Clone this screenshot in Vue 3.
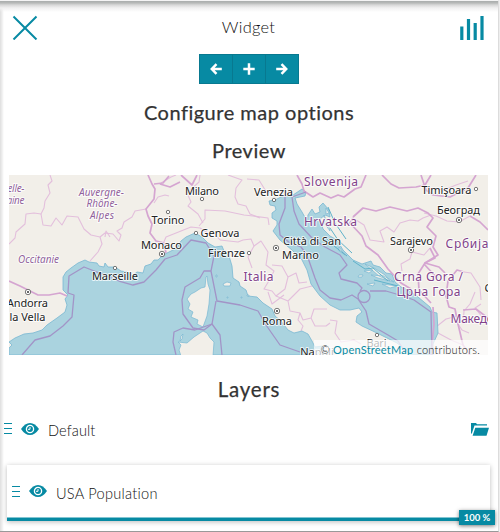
<script setup>
const regions = [
  'M9 244L15 238L16 232L25 224L26 214L34 213L41 214L44 208L45 201L50 193L48 185L52 181L50 175',
  'M41 214L43 225L51 226L56 218L62 225L67 216L78 217L84 229L91 235L100 237L105 233L113 234L119 241L121 235L117 231L122 228L124 222L132 217L135 211L146 209',
  'M100 237L102 244L98 252L90 261M105 237L106 231L110 237',
  'M154 203L158 197L165 195L169 196',
  'M199 226L205 219L205 210L225 211L244 215L253 216L268 218L269 225',
  'M200 175L199 182L187 193L191 202L188 206L198 214L203 223',
  'M161 183L171 177L176 175M228 175L242 180L236 188L235 197L238 204L246 206L250 214L260 218',
  'M247 179L259 180L267 193L279 191L291 193',
  'M163 244L166 237L181 231L191 227L200 228L208 233L215 234L220 240',
  'M220 240L238 242L243 240L251 239L254 246L261 241L268 252L266 265L274 271L270 279L264 289L272 291L276 296L285 289L288 277L296 273L299 283L307 282',
  'M254 246L248 257L252 268M268 292L272 304L284 295M272 265L282 266L288 277',
  'M276 296L288 301L300 289L316 285M288 301L290 311L300 313L303 320L311 318L314 309L327 309',
  'M300 313L298 320L303 326L301 331M311 318L315 326L326 326L330 323',
  'M330 320L337 321L335 333L341 342L354 340L361 344',
  'M353 218L364 225L370 240L384 242L380 231L387 227L394 232L400 223L410 220L418 221L423 218L431 215',
  'M402 271L401 264L410 259L412 252L424 255L430 248',
  'M424 187L444 190L456 185L468 181M424 213L436 216L447 221L459 222L470 216',
  'M464 272L471 273L480 287L481 300M475 292L470 304L464 311L463 324M436 327L446 319L458 316',
  'M481 304L475 308L483 318L488 316M438 333L451 340L463 345M454 318L462 330L469 333',
]
const borders = [
  'M9 281L20 286L30 291L38 295L49 295L60 293L67 296',
  'M148 175L152 184L155 189L154 199L146 209L148 216L152 224L150 233L156 241L164 243L166 253',
  'M154 184L163 183L169 176M160 184L170 187L180 182M181 175L192 185L197 175',
  'M297 175L302 184L304 191L313 197L320 193L331 198L338 195L344 197L355 189L361 187L366 175',
  'M382 175L391 184L399 188L416 187L425 185L431 175',
  'M421 175L426 190L433 195L450 197L468 188L476 175M470 216L480 222L488 230',
  'M353 217L363 208L376 211L390 207L407 211L418 208L428 213L433 218L427 227L436 236L433 247L438 255L425 263L418 274L419 290L431 303',
  'M353 218L350 223L362 236L366 246L378 255L388 269L401 283L411 289',
  'M430 248L435 258L425 263L439 267L445 273M424 264L437 278M433 307L434 324L431 355',
  'M464 272L457 270L448 281L446 296L449 307L455 309L458 324L463 345L470 355M463 310L476 309L488 318',
]
const maritime = [
  'M22 355L35 340L50 336L63 326L72 317L74 295L68 293L69 276L84 267L102 274L119 281L133 285L144 282L156 270L165 259L177 255L191 240L206 243L214 256L211 271L217 301L240 305L258 311L266 325L280 345L300 352',
  'M211 271L204 271L200 278L185 287L182 300L183 314L193 328L204 330L212 324L216 301',
  'M176 355L173 342L174 332L183 328L195 330L212 324L220 335L222 355',
  'M285 194L285 208L279 224L280 235L290 243L301 247L307 255L315 278L320 290L330 298L341 300L352 295L358 299L366 311L369 324L388 335L398 341L405 352',
  'M306 192L292 197L294 211L299 224L312 238L325 247L340 255L347 265L339 273L341 279L357 283L362 288L360 291M370 291L386 291L403 296L414 300L431 312L432 355',
]
const places = [
  { t: 'Milano', x: 202, y: 195 },
  { t: 'Torino', x: 168, y: 223.5 },
  { t: 'Genova', x: 220, y: 237 },
  { t: 'Monaco', x: 161.5, y: 248.5 },
  { t: 'Firenze', x: 226.5, y: 257 },
  { t: 'Venezia', x: 273.5, y: 196 },
  { t: 'Marseille', x: 115, y: 280 },
  { t: 'Andorra', x: 27.5, y: 307 },
  { t: 'la Vella', x: 27.5, y: 320.5 },
  { t: 'Città di San', x: 312, y: 245 },
  { t: 'Marino', x: 300.5, y: 259 },
  { t: 'Roma', x: 277, y: 325 },
  { t: 'Sarajevo', x: 411.5, y: 245 },
  { t: 'Timişoara', x: 446.5, y: 193.5 },
  { t: 'Београд', x: 458.5, y: 214 },
  { t: 'Napoli', x: 317, y: 356 },
  { t: 'Bari', x: 376.5, y: 346.5 },
  { t: 'Скопје', x: 502, y: 292 },
]
const widths = {
  Milano: 34, Torino: 33, Genova: 39, Monaco: 41, Firenze: 37, Venezia: 39, Marseille: 46, Andorra: 41,
  'la Vella': 36, 'Città di San': 58, Marino: 37, Roma: 30, Sarajevo: 43, 'Timişoara': 50, 'Београд': 43, Bari: 20,
}
const countries = [
  { t: 'Slovenija', x: 331, y: 186, w: 54 },
  { t: 'Hrvatska', x: 330.5, y: 226, w: 53 },
  { t: 'Italia', x: 258.5, y: 281, w: 30 },
  { t: 'Србија', x: 467, y: 248, w: 43 },
  { t: 'Crna Gora /', x: 428.5, y: 280.5, w: 69 },
  { t: 'Црна Гора', x: 428.5, y: 295.5, w: 64 },
  { t: 'Македонија', x: 484, y: 323, w: 67 },
]
const provinces = [
  { t: 'Auvergne-', x: 101.5, y: 195.5, w: 45 },
  { t: 'Rhône-', x: 102, y: 207, w: 31 },
  { t: 'Alpes', x: 102, y: 219, w: 24 },
  { t: 'Occitanie', x: 38.5, y: 262.5, w: 41 },
  { t: 'Nouvelle-', x: 5, y: 191.5, w: 39 },
  { t: 'Aquitaine', x: 5, y: 203.5, w: 39 },
]
const towns = [[202, 199], [168, 212], [196, 233], [249, 253], [274, 200], [115, 268], [476, 189], [377, 335]]
const capitals = [[162, 254], [28, 292], [276, 248], [277, 311], [411, 250], [459, 220]]
const layers = [
  { name: 'Default', group: true },
  { name: 'USA Population', opacity: 100 },
]
</script>

<template>
  <main class="panel">
    <header class="head">
      <svg class="close" viewBox="0 0 26 26"><path d="M1.500 2.500L24.500 25.500M24.500 2.500L1.500 25.500" /></svg>
      <span class="title">Widget</span>
      <svg class="chart" viewBox="0 0 26 26"><path d="M2.800 12.500V26M9.500 5V26M16.200 9V26M23 2V26" /></svg>
    </header>

    <nav class="buttons">
      <button><svg viewBox="0 0 12 12"><path d="M6.500 1.200L1.800 6L6.500 10.800M2 6H11.800" /></svg></button>
      <button><svg viewBox="0 0 12 12"><path d="M6 .3V11.700M.3 6H11.700" /></svg></button>
      <button><svg viewBox="0 0 12 12"><path d="M5.500 1.200L10.200 6L5.500 10.800M10 6H.2" /></svg></button>
    </nav>

    <h4 class="h-config"><span>Configure map options</span></h4>
    <h4 class="h-preview"><span>Preview</span></h4>

    <div class="map">
      <svg viewBox="9 175 479 180">
        <rect x="9" y="175" width="479" height="180" fill="#f2efe9" />
        <g class="region"><path v-for="d in regions" :key="d" :d="d" /></g>
        <g class="sea">
          <path d="M9 355V348L12 345L9 342L15 338L24 334L33 333L42 330L47 325L57 318L65 312L67 305L65 299L68 295L63 290L63 277L66 272L71 268L78 263L85 260L89 262L97 263L99 266L104 267L105 263L108 267L115 267L121 271L127 272L132 276L137 272L143 273L145 266L151 264L154 260L158 260L163 255L169 252L177 248L181 241L186 237L195 233L202 237L208 243L215 247L222 246L224 251L229 256L232 266L233 278L239 282L240 286L246 290L248 296L257 297L263 303L272 309L275 316L281 321L288 330L294 333L302 331L308 334L312 341L315 347L323 346L326 355Z" />
          <path d="M306 192L302 189L293 195L283 196L275 200L269 201L270 205L275 206L276 210L272 213L272 218L277 221L277 225L273 231L280 240L292 250L302 260L307 270L311 284L320 296L330 305L340 310L350 310L359 308L362 312L357 316L356 322L362 326L377 333L397 343L408 352L410 355H433L433 344L438 333L437 313L432 312L430 307L418 297L408 290L401 287L395 282L392 274L386 273L380 267L373 265L371 261L362 264L353 260L343 250L337 240L330 236L323 229L320 219L325 215L330 217L329 210L323 203L319 207L320 212L315 214L312 209L308 215L307 221L302 212L297 204L295 198L305 196Z" />
        </g>
        <g class="land">
          <path d="M207 276L208 284L210 290L209 304L207 316L203 327L197 324L198 320L191 317L193 312L188 309L190 304L187 299L191 294L195 292L201 288L205 287L206 277Z" />
          <path d="M203 331L207 333L210 338L214 342L213 356H181L179 350L181 345L178 342L187 343L194 337L200 333Z" />
          <path d="M181 336L183 334L182 339L180 341ZM223 284L227 282L231 283L230 286L224 286ZM216 275h1v2h-1ZM227 297h1v1h-1ZM241 297h1v1h-1ZM247 295h2v1h-2Z" />
          <path d="M324 215L328 224L330 231L325 224ZM326 208L329 213L326 214ZM331 238L336 244L333 243ZM339 247L345 255L339 251ZM365 264L374 268L385 275L390 281L379 276ZM364 271L373 270L369 273ZM371 275L384 276L394 282L378 278ZM359 275h4l-1 2h-4ZM367 284L375 283L373 286ZM382 284L397 286L390 288Z" />
        </g>
        <g class="coastdetail"><path d="M328 207L335 223L346 239M330 228L338 240L352 253M325 237L334 246L347 256M353 261L365 269L373 268L388 281M374 280L398 286" /></g>
        <g class="border"><path v-for="d in borders" :key="d" :d="d" /></g>
        <g class="maritime"><path v-for="d in maritime" :key="d" :d="d" /><circle cx="364" cy="296.500" r="6" /></g>
        <g class="dot">
          <circle v-for="(c, i) in towns" :key="i" :cx="c[0]" :cy="c[1]" r="1.700" />
          <g v-for="(c, i) in capitals" :key="'c' + i">
            <circle :cx="c[0]" :cy="c[1]" r="2.700" /><circle class="core" :cx="c[0]" :cy="c[1]" r="1" />
          </g>
        </g>
        <g class="province"><text v-for="p in provinces" :key="p.t" :x="p.x" :y="p.y" :textLength="p.w">{{ p.t }}</text></g>
        <g class="country"><text v-for="p in countries" :key="p.t" :x="p.x" :y="p.y" :textLength="p.w">{{ p.t }}</text></g>
        <g class="place"><text v-for="p in places" :key="p.t" :x="p.x" :y="p.y" :textLength="widths[p.t]">{{ p.t }}</text></g>
      </svg>
      <div class="credit">© <a>OpenStreetMap</a> contributors.</div>
    </div>

    <h4 class="h-layers"><span>Layers</span></h4>

    <section v-for="l in layers" :key="l.name" :class="['layer', l.group ? 'group' : 'card']">
      <svg class="grip" viewBox="0 0 8 12"><path d="M0 .5H8M0 5.500H8M0 10.500H8" /></svg>
      <svg class="eye" viewBox="0 0 18 12">
        <path d="M0 6Q4 0 9 0T18 6Q14 12 9 12T0 6Z" fill="#078aa3" />
        <circle cx="9" cy="6" r="3.600" fill="none" stroke="#fff" stroke-width="1.300" />
        <path d="M9 4V6.300H7" fill="none" stroke="#fff" stroke-width="1" />
      </svg>
      <span class="name">{{ l.name }}</span>
      <svg v-if="l.group" class="folder" viewBox="0 0 18 13">
        <path d="M0 11V0H5L6 1.200H16V2.600H3.500L1 10ZM4.300 4.800H18L15.500 12.700H1.600Z" />
      </svg>
      <template v-else>
        <div class="track"><div class="bar" :style="{ width: l.opacity + '%' }"></div></div>
        <span class="badge">{{ l.opacity }} %</span>
      </template>
    </section>
  </main>
</template>

<style>
body { margin: 0; background: #fff; overflow: hidden; }
</style>

<style scoped>
* { box-sizing: border-box; }
svg { display: block; }
.panel {
  width: 499px; height: 532px; overflow: hidden; display: flex; flex-direction: column;
  border-top: 1px solid #f4f4f4; border-right: 1px solid #dcdcdc; border-bottom: 1px solid #999;
  box-shadow: 1px 0 0 #eee;
  background: linear-gradient(#a9adac 0, #b7b9b8 2px, #d8d8d8 4px, #f1f1f1 7px, transparent 11px), linear-gradient(90deg, #dedede 0, #eee 2px, #fff 4px);
  font-family: Lato, "Open Sans", sans-serif; font-weight: 300; color: #111;
}
.head { height: 53px; padding: 13px 13px 0 12px; display: flex; align-items: flex-start; justify-content: space-between; }
.head svg { width: 26px; height: 26px; fill: none; stroke: #078aa3; }
.close { stroke-width: 2; }
.chart { stroke-width: 3.2; }
.title { font-size: 16.4px; line-height: 26px; letter-spacing: .3px; }
.buttons { height: 30px; display: flex; justify-content: center; }
button { width: 34px; height: 30px; padding: 0 0 1px; border: 1px solid #087990; background: #078aa3; display: flex; align-items: center; justify-content: center; }
button + button { margin-left: -1px; }
button svg { width: 12px; height: 12px; fill: none; stroke: #fff; stroke-width: 2.5; }
h4 { margin: 0; font-size: 20px; line-height: 24px; font-weight: 400; text-align: center; color: #333; -webkit-text-stroke: .25px #333; }
.h-config { margin-top: 16px; letter-spacing: .5px; }
.h-preview { margin-top: 14px; letter-spacing: .5px; }
.h-layers { margin-top: 22px; font-size: 20.5px; letter-spacing: .75px; }
.map { width: 479px; height: 180px; margin: 13px 0 0 9px; display: grid; flex: none; }
.map svg { width: 479px; height: 180px; grid-area: 1 / 1; }
.credit { grid-area: 1 / 1; place-self: end; width: 174px; height: 15px; padding-right: 8px; background: rgba(255, 255, 255, .7); font-size: 11px; line-height: 19px; text-align: right; white-space: nowrap; letter-spacing: .23px; overflow: hidden; }
.credit a { color: #078aa3; font-weight: 400; }
.map path { stroke-linejoin: round; }
.region { fill: none; stroke: #e3bfdc; stroke-width: 1.1; }
.sea { fill: #aad3df; stroke: #79b8d2; stroke-width: .8; }
.land { fill: #f2efe9; stroke: #79b8d2; stroke-width: .7; }
.coastdetail { fill: none; stroke: #5fb2ca; stroke-width: 1; }
.border { fill: none; stroke: #d5a5d1; stroke-width: 1.7; }
.maritime { fill: none; stroke: #a294c7; stroke-width: 1.3; }
.dot { fill: #fff; stroke: #555; stroke-width: .8; }
.dot .core { fill: #333; stroke: none; }
.map text { font-family: "Noto Sans", sans-serif; text-anchor: middle; paint-order: stroke; stroke: rgba(255, 255, 255, .75); stroke-width: 2px; stroke-linejoin: round; font-weight: 400; }
.place { font-size: 11px; fill: #222; }
.country { font-size: 12px; fill: #81428a; }
.province { font-size: 10px; font-style: italic; fill: #91629c; }
.layer { display: flex; }
.grip { width: 8px; height: 12px; fill: none; stroke: #078aa3; stroke-width: 1; }
.eye { width: 18px; height: 12px; margin-left: 9px; }
.name { font-size: 14.6px; line-height: 20px; }
.group { height: 20px; margin-top: 19px; padding: 0 9px 0 4px; flex: none; }
.group .grip, .group .eye { margin-top: 3px; }
.group .name { margin-left: 9px; line-height: 22px; letter-spacing: .1px; }
.folder { width: 18px; height: 13px; margin: 3px 0 0 auto; fill: #078aa3; }
.card { position: relative; flex: none; width: 483px; height: 56px; margin: 25px 0 0 7px; padding: 20px 0 0 5px; background: #fff; box-shadow: 0 1px 5px rgba(0, 0, 0, .27); }
.card .grip { margin-top: 1px; }
.card .name { margin-left: 9px; line-height: 17px; letter-spacing: .26px; }
.track { position: absolute; left: 0; right: 0; bottom: 0; height: 4px; border-top: 1px solid #83c5d2; background: #ddd; }
.bar { height: 3px; background: #078aa3; }
.badge { position: absolute; right: -5px; bottom: -4px; width: 36px; height: 15px; background: #078aa3; color: #fff; font-size: 9.5px; line-height: 15px; font-weight: 700; text-align: center; box-shadow: 0 1px 4px rgba(0, 0, 0, .5); }
</style>
